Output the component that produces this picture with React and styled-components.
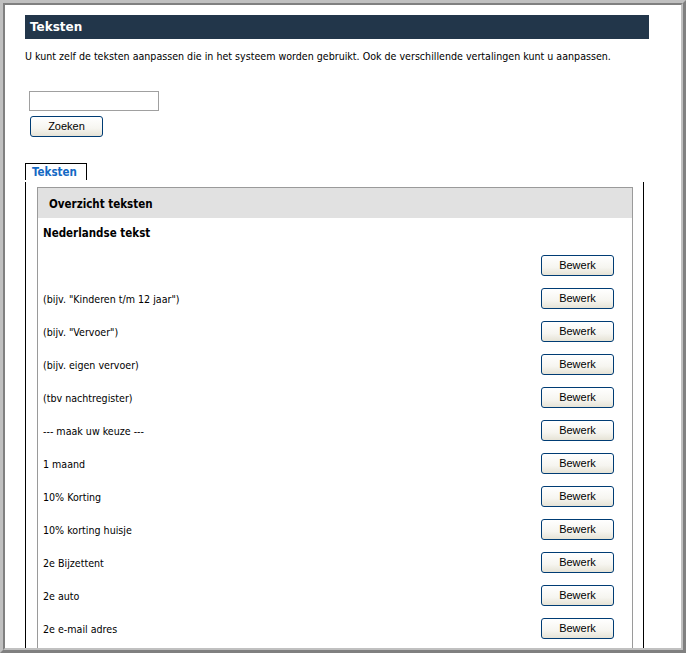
import React from "react";
import styled, { createGlobalStyle } from "styled-components";

const GlobalStyle = createGlobalStyle`
  html, body {
    margin: 0;
    padding: 0;
    background: #ffffff;
  }
  body {
    font-family: "Liberation Sans", Arial, sans-serif;
    font-size: 11px;
    color: #000000;
  }
`;

const Frame = styled.div`
  width: 686px;
  height: 653px;
  box-sizing: border-box;
  border: 3px solid;
  border-color: #c0c0c0 #808080 #808080 #c0c0c0;
  overflow: hidden;
`;

const Inner = styled.div`
  height: 100%;
  box-sizing: border-box;
  border: 2px solid;
  border-color: #808080 #c0c0c0 #c0c0c0 #808080;
  padding: 10px 0 0 20px;
  overflow: hidden;
`;

const TitleBar = styled.div`
  width: 624px;
  height: 24px;
  box-sizing: border-box;
  background: #22364a;
  color: #ffffff;
  font-family: "DejaVu Sans", Verdana, sans-serif;
  font-weight: bold;
  font-size: 12px;
  line-height: 24px;
  padding-left: 5px;
`;

const Intro = styled.p`
  margin: 10px 0 0;
  line-height: 14px;
  font-family: "DejaVu Sans Condensed", "DejaVu Sans", sans-serif;
  font-size: 10.6px;
`;

const Search = styled.div`
  display: flex;
  flex-direction: column;
  align-items: flex-start;
  gap: 5px;
  margin: 28px 0 0 4px;
`;

const SearchInput = styled.input`
  width: 130px;
  height: 20px;
  box-sizing: border-box;
  border: 1px solid #a0a0a0;
  padding: 0 3px;
  font-size: 11px;
`;

const Button = styled.button`
  width: 73px;
  height: 21px;
  box-sizing: border-box;
  margin-left: ${({ $shift }) => $shift || 0}px;
  border: 1px solid #003c74;
  border-radius: 3px;
  background: linear-gradient(#ffffff 0%, #f6f5f0 60%, #e6e3d6 100%);
  font-family: "Liberation Sans", Arial, sans-serif;
  font-size: 11px;
  color: #000000;
  padding: 0;
  line-height: 19px;
  flex-shrink: 0;
`;

const Tabs = styled.div`
  margin-top: 26px;
`;

const Tab = styled.div`
  width: 62px;
  height: 17px;
  box-sizing: border-box;
  border: 1px solid #000000;
  border-bottom: none;
  color: #1469c4;
  font-family: "DejaVu Sans Condensed", "DejaVu Sans", sans-serif;
  font-weight: bold;
  font-size: 11.5px;
  line-height: 17px;
  padding-left: 6px;
`;

const Panel = styled.div`
  width: 619px;
  height: 480px;
  box-sizing: border-box;
  margin-top: 2px;
  border-left: 1px solid #000000;
  border-right: 1px solid #000000;
  padding: 5px 10px 0 11px;
`;

const Box = styled.div`
  height: 100%;
  box-sizing: border-box;
  border: 1px solid #9a9a9a;
  border-bottom: none;
`;

const BoxHead = styled.div`
  height: 30px;
  background: #e1e1e1;
  font-family: "DejaVu Sans Condensed", "DejaVu Sans", sans-serif;
  font-weight: bold;
  font-size: 11.5px;
  line-height: 32px;
  padding-left: 11px;
`;

const Column = styled.div`
  height: 31px;
  line-height: 31px;
  padding-left: 5px;
  font-family: "DejaVu Sans Condensed", "DejaVu Sans", sans-serif;
  font-weight: bold;
  font-size: 11.5px;
`;

const Row = styled.div`
  height: 33px;
  display: flex;
  align-items: center;
  justify-content: space-between;
  padding: 0 18px 0 5px;
  font-family: "DejaVu Sans Condensed", "DejaVu Sans", sans-serif;
  font-size: 10.6px;
`;

const items = [
  "",
  '(bijv. "Kinderen t/m 12 jaar")',
  '(bijv. "Vervoer")',
  "(bijv. eigen vervoer)",
  "(tbv nachtregister)",
  "--- maak uw keuze ---",
  "1 maand",
  "10% Korting",
  "10% korting huisje",
  "2e Bijzettent",
  "2e auto",
  "2e e-mail adres",
];

export default function App() {
  return (
    <>
      <GlobalStyle />
      <Frame>
        <Inner>
          <TitleBar>Teksten</TitleBar>
          <Intro>
            U kunt zelf de teksten aanpassen die in het systeem worden gebruikt. Ook de
            verschillende vertalingen kunt u aanpassen.
          </Intro>
          <Search>
            <SearchInput type="text" />
            <Button $shift={1}>Zoeken</Button>
          </Search>
          <Tabs>
            <Tab>Teksten</Tab>
            <Panel>
              <Box>
                <BoxHead>Overzicht teksten</BoxHead>
                <Column>Nederlandse tekst</Column>
                {items.map((text, i) => (
                  <Row key={i}>
                    <span>{text}</span>
                    <Button>Bewerk</Button>
                  </Row>
                ))}
              </Box>
            </Panel>
          </Tabs>
        </Inner>
      </Frame>
    </>
  );
}
